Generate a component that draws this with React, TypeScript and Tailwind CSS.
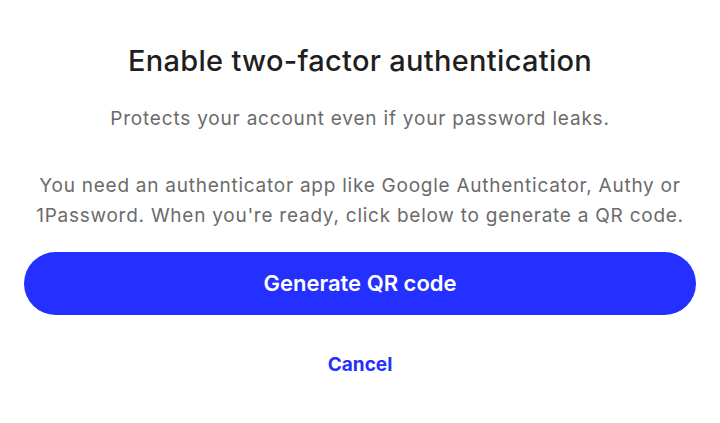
export default function App() {
  return (
    <div className="min-h-screen bg-white px-6 pt-[38px] text-center" style={{ fontFamily: "Inter, 'Noto Sans', sans-serif" }}>
      <h1 className="text-[29px] leading-[46px] font-medium tracking-[0.3px] text-[#1f1f1f]">Enable two-factor authentication</h1>
      <p className="mt-[20px] text-[19px] leading-[30px] tracking-[0.8px] text-[#6b6b6b]">
        Protects your account even if your password leaks.
      </p>
      <p className="mt-[37px] text-[19px] leading-[30px] tracking-[0.75px] text-[#6b6b6b]">
        You need an authenticator app like Google Authenticator, Authy or
        <br />
        1Password. When you're ready, click below to generate a QR code.
      </p>
      <button className="mt-[21px] w-full h-[63px] rounded-full bg-[#2330ff] text-white text-[22px] font-semibold">
        Generate QR code
      </button>
      <div className="mt-[36px]">
        <button className="text-[19px] font-bold text-[#2330ff]">Cancel</button>
      </div>
    </div>
  );
}
